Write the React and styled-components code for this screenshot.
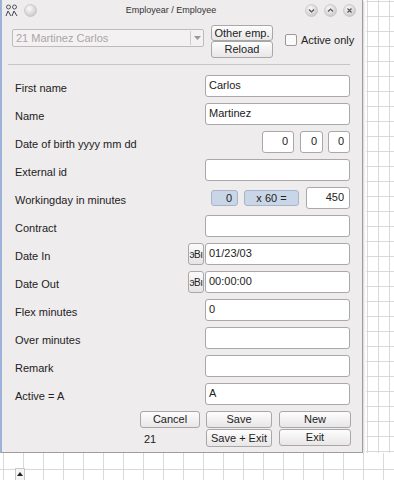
import React from 'react';
import styled, { createGlobalStyle, css } from 'styled-components';

const colors = {
  windowBg: '#efeced',
  border: '#a7a5a6',
  text: '#222',
  grid: '#d9d9d9',
  blueBox: '#c9d6e7',
};

const GlobalStyle = createGlobalStyle`
  html, body {
    margin: 0;
    padding: 0;
    background: #fff;
    overflow: hidden;
  }
  body {
    font-family: 'Liberation Sans', Arial, sans-serif;
    font-size: 11px;
    color: ${colors.text};
  }
`;

const Page = styled.div`
  width: 394px;
  height: 480px;
  display: flex;
  flex-direction: column;
`;

const TopArea = styled.div`
  display: flex;
  height: 453px;
`;

const Window = styled.div`
  width: 360px;
  display: flex;
  flex-direction: column;
  background: ${colors.windowBg};
  border-left: 2px solid #9cb2d6;
  border-right: 1px solid #9e9c9d;
  border-bottom: 1px solid #9e9c9d;
  box-shadow: 1px 1px 2px rgba(0, 0, 0, 0.18);
`;

const RightStrip = styled.div`
  flex: 1;
  margin-left: 3px;
  background-color: #fff;
  background-image:
    linear-gradient(to right, ${colors.grid} 1px, transparent 1px),
    linear-gradient(to bottom, ${colors.grid} 1px, transparent 1px);
  background-size: 11px 15px;
  background-position: 1px 16px;
`;

const BottomStrip = styled.div`
  flex: 1;
  display: flex;
  align-items: flex-end;
  padding-left: 15px;
  background-color: #fff;
  background-image:
    linear-gradient(to right, ${colors.grid} 1px, transparent 1px),
    linear-gradient(to bottom, ${colors.grid} 1px, transparent 1px);
  background-size: 20px 20px;
  background-position: 3px 16px;
`;

const ScrollArrow = styled.div`
  width: 10px;
  height: 12px;
  background: #f4f4f4;
  border: 1px solid #c8c8c8;
  border-bottom: none;
  display: flex;
  justify-content: center;
  padding-top: 3px;
  box-sizing: border-box;
`;

const TitleBar = styled.div`
  height: 20px;
  display: flex;
  align-items: center;
  padding: 0 4px 0 3px;
  gap: 6px;
`;

const Title = styled.div`
  flex: 1;
  text-align: center;
  font-size: 9px;
  color: #333;
`;

const TitleButtons = styled.div`
  display: flex;
  gap: 6px;
  margin-right: 2px;
`;

const Header = styled.div`
  display: flex;
  align-items: flex-start;
  padding: 5px 0 0 10px;
`;

const Combo = styled.div`
  width: 192px;
  height: 18px;
  margin-top: 4px;
  box-sizing: border-box;
  display: flex;
  align-items: center;
  border: 1px solid #bdbbbc;
  border-radius: 2px;
  background: #f3f1f2;
  color: #a8a6a7;
  font-size: 11px;
`;

const ComboText = styled.span`
  flex: 1;
  padding-left: 3px;
`;

const ComboArrow = styled.span`
  width: 12px;
  height: 14px;
  border-left: 1px solid #cfcdce;
  display: flex;
  align-items: center;
  justify-content: center;
`;

const ButtonStack = styled.div`
  display: flex;
  flex-direction: column;
  margin-left: 7px;
`;

const Button = styled.button`
  font-family: 'Liberation Sans', Arial, sans-serif;
  font-size: 11px;
  color: #222;
  height: ${props => props.h || 17}px;
  width: ${props => props.w}px;
  padding: 0;
  border: 1px solid #a9a7a8;
  border-radius: 3px;
  background: linear-gradient(#fdfdfd, #e8e6e7);
  box-sizing: border-box;
  line-height: 1;
`;

const Check = styled.label`
  display: flex;
  align-items: center;
  gap: 4px;
  margin: 9px 0 0 12px;
  font-size: 11px;
`;

const CheckBox = styled.span`
  width: 10px;
  height: 10px;
  border: 1px solid #9b999a;
  border-radius: 2px;
  background: #fafafa;
`;

const Separator = styled.div`
  height: 1px;
  background: #c6c4c5;
  margin: 6px 12px 0 6px;
`;

const Form = styled.div`
  display: flex;
  flex-direction: column;
  gap: 6px;
  padding: 10px 12px 0 13px;
`;

const Row = styled.div`
  display: flex;
  align-items: center;
  height: 22px;
`;

const Label = styled.div`
  flex: 1;
  padding-top: 3px;
`;

const Input = styled.div`
  width: ${props => props.w || 145}px;
  height: ${props => props.h || 22}px;
  box-sizing: border-box;
  display: flex;
  align-items: center;
  justify-content: ${props => (props.right ? 'flex-end' : 'flex-start')};
  padding: 0 5px 2px 3px;
  margin-left: ${props => props.ml || 0}px;
  border: 1px solid #aaa8a9;
  border-radius: 3px;
  background: #fff;
  font-size: 11px;

  ${props => props.blue && css`
    background: ${colors.blueBox};
    border-color: #a9b5c6;
    justify-content: ${props.right ? 'flex-end' : 'center'};
    padding: 0 ${props.right ? 5 : 0}px 1px 0;
  `}
`;

const SmallButton = styled.div`
  width: 16px;
  height: 22px;
  box-sizing: border-box;
  margin-right: 1px;
  display: flex;
  align-items: center;
  justify-content: center;
  white-space: nowrap;
  border: 1px solid #aaa8a9;
  border-radius: 3px;
  background: linear-gradient(#fbfbfb, #e6e4e5);
  font-size: 10px;
  letter-spacing: -0.6px;
`;

const Footer = styled.div`
  display: grid;
  grid-template-columns: 60px 66px 72px;
  column-gap: 6px;
  row-gap: 1px;
  justify-content: end;
  padding: 6px 12px 0 0;
  & > :nth-child(3n + 3) {
    margin-left: 1px;
  }
`;

const Count = styled.div`
  padding: 4px 0 0 4px;
`;

const AppIcon = () => (
  <svg width="13" height="13" viewBox="0 0 13 13">
    <circle cx="3.5" cy="3" r="2" fill="none" stroke="#556" strokeWidth="1" />
    <circle cx="9.5" cy="3" r="2" fill="none" stroke="#556" strokeWidth="1" />
    <path d="M1 12 L3 7 L6 12 M7 12 L9 7 L12 12" fill="none" stroke="#445" strokeWidth="1" />
  </svg>
);

const Round = ({ glyph }) => (
  <svg width="13" height="13" viewBox="0 0 13 13">
    <defs>
      <radialGradient id={`g-${glyph}`} cx="0.4" cy="0.35" r="0.7">
        <stop offset="0" stopColor="#fafafa" />
        <stop offset="1" stopColor="#c9c7c8" />
      </radialGradient>
    </defs>
    <circle cx="6.5" cy="6.5" r="6" fill={`url(#g-${glyph})`} stroke="#bdbbbc" strokeWidth="0.6" />
    {glyph === 'down' && <path d="M4 5.5 L6.5 8 L9 5.5" fill="none" stroke="#555" strokeWidth="1.2" />}
    {glyph === 'up' && <path d="M4 7.5 L6.5 5 L9 7.5" fill="none" stroke="#555" strokeWidth="1.2" />}
    {glyph === 'close' && <path d="M4.5 4.5 L8.5 8.5 M8.5 4.5 L4.5 8.5" stroke="#555" strokeWidth="1.2" />}
  </svg>
);

const fields = [
  { label: 'First name', value: 'Carlos' },
  { label: 'Name', value: 'Martinez' },
  { label: 'Date of birth yyyy mm dd', type: 'dob' },
  { label: 'External id', value: '' },
  { label: 'Workingday in minutes', type: 'work' },
  { label: 'Contract', value: '' },
  { label: 'Date In', value: '01/23/03', button: true },
  { label: 'Date Out', value: '00:00:00', button: true },
  { label: 'Flex minutes', value: '0' },
  { label: 'Over minutes', value: '' },
  { label: 'Remark', value: '' },
  { label: 'Active = A', value: 'A' },
];

const renderControl = (f) => {
  if (f.type === 'dob') {
    return (
      <>
        <Input w={32} right>0</Input>
        <Input w={23} ml={6} right>0</Input>
        <Input w={22} ml={5} right>0</Input>
      </>
    );
  }
  if (f.type === 'work') {
    return (
      <>
        <Input w={27} h={16} blue right>0</Input>
        <Input w={55} h={16} ml={6} blue>x 60 =</Input>
        <Input w={44} ml={7} right>450</Input>
      </>
    );
  }
  return (
    <>
      {f.button && <SmallButton>эВı</SmallButton>}
      <Input>{f.value}</Input>
    </>
  );
};

const App = () => (
  <Page>
    <GlobalStyle />
    <TopArea>
      <Window>
        <TitleBar>
          <AppIcon />
          <Round glyph="blank" />
          <Title>Employear / Employee</Title>
          <TitleButtons>
            <Round glyph="down" />
            <Round glyph="up" />
            <Round glyph="close" />
          </TitleButtons>
        </TitleBar>

        <Header>
          <Combo>
            <ComboText>21 Martinez Carlos</ComboText>
            <ComboArrow>
              <svg width="7" height="4" viewBox="0 0 7 4">
                <path d="M0 0 L7 0 L3.5 4 Z" fill="#999" />
              </svg>
            </ComboArrow>
          </Combo>
          <ButtonStack>
            <Button w={62} h={16}>Other emp.</Button>
            <Button w={62} h={17}>Reload</Button>
          </ButtonStack>
          <Check>
            <CheckBox />
            Active only
          </Check>
        </Header>

        <Separator />

        <Form>
          {fields.map(f => (
            <Row key={f.label}>
              <Label>{f.label}</Label>
              {renderControl(f)}
            </Row>
          ))}
        </Form>

        <Footer>
          <Button w={60}>Cancel</Button>
          <Button w={66}>Save</Button>
          <Button w={72}>New</Button>
          <Count>21</Count>
          <Button w={66} h={18}>Save + Exit</Button>
          <Button w={72}>Exit</Button>
        </Footer>
      </Window>
      <RightStrip />
    </TopArea>
    <BottomStrip>
      <ScrollArrow>
        <svg width="6" height="4" viewBox="0 0 6 4">
          <path d="M0 4 L6 4 L3 0 Z" fill="#222" />
        </svg>
      </ScrollArrow>
    </BottomStrip>
  </Page>
);

export default App;
